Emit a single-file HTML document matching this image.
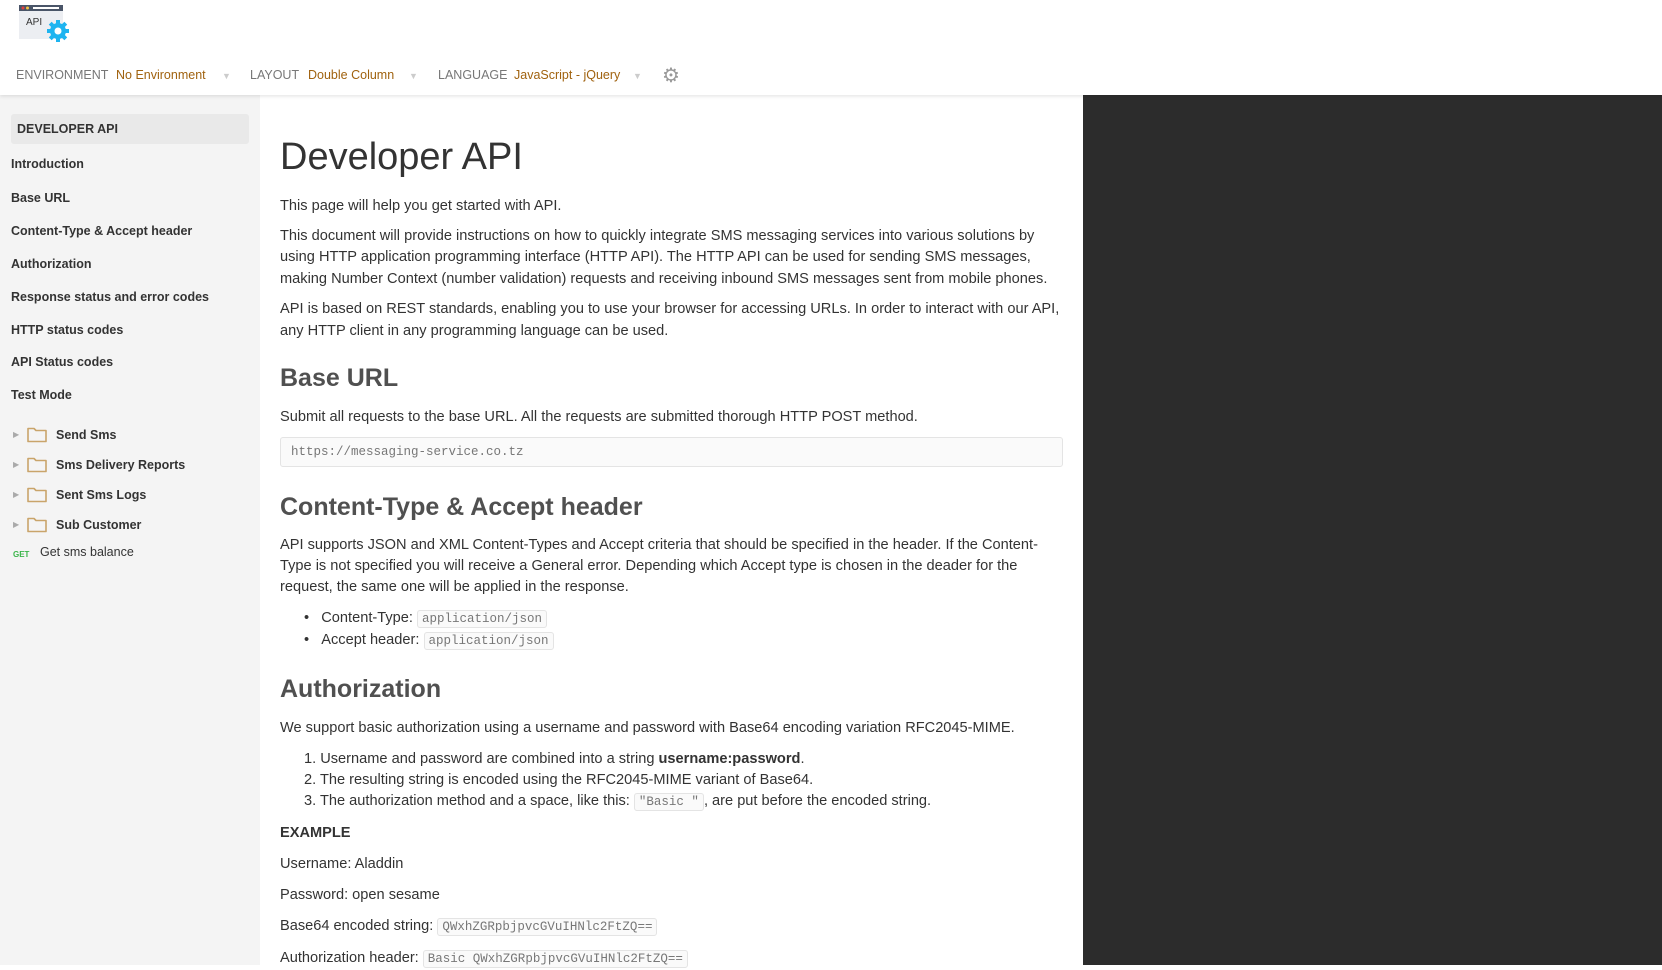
<!DOCTYPE html>
<html><head><meta charset="utf-8"><style>
*{margin:0;padding:0;box-sizing:border-box}
body{width:1662px;height:965px;overflow:hidden;background:#fff;font-family:"Liberation Sans",sans-serif;color:#333;position:relative}
.a{position:absolute;white-space:nowrap}
.hdr{position:absolute;left:0;top:0;width:1662px;height:95px;background:#fff;box-shadow:0 1px 4px rgba(0,0,0,.12);z-index:2}
.nav{font-size:12.5px;top:68px}
.lab{color:#777}
.val{color:#a0620f}
.tri{color:#ccc;font-size:9px;top:71px}
.side{position:absolute;left:0;top:95px;width:260px;height:870px;background:#f4f4f4}
.dark{position:absolute;left:1083px;top:95px;width:579px;height:870px;background:#2c2c2c}
.si{font-size:12.5px;font-weight:bold;color:#333;left:11px}
.fl{font-size:12.5px;color:#333;left:56px;font-weight:bold}
.t{font-size:14.6px;line-height:22px;left:280px;color:#333}
.h2{font-size:25px;font-weight:bold;color:#505050;left:280px}
code{font-family:"Liberation Mono",monospace;font-size:12.5px;color:#777;border:1px solid #e4e4e4;background:#fafafa;border-radius:3px;padding:1px 4px}
</style></head><body>
<div class="hdr">
<svg class="a" style="left:19px;top:3px" width="52" height="40" viewBox="0 0 52 40">
<rect x="0" y="2" width="44" height="34" fill="#eceef2"/>
<rect x="0" y="2" width="44" height="6" fill="#4a5568"/>
<circle cx="4" cy="5" r="1.5" fill="#e53e3e"/><circle cx="8.5" cy="5" r="1.5" fill="#f6c343"/>
<rect x="14" y="4" width="26" height="2" fill="#fff"/>
<text x="7" y="22" font-size="10" font-family="Liberation Sans" fill="#333">API</text>
<g fill="#1eb4f0"><circle cx="39" cy="28" r="8"/>
<rect x="37" y="17" width="4" height="22"/><rect x="28" y="26" width="22" height="4"/>
<rect x="37" y="17" width="4" height="22" transform="rotate(45 39 28)"/><rect x="37" y="17" width="4" height="22" transform="rotate(-45 39 28)"/></g>
<circle cx="39" cy="28" r="3.5" fill="#fff"/>
</svg>
<div class="a nav lab" style="left:16px">ENVIRONMENT</div>
<div class="a nav val" style="left:116px">No Environment</div>
<div class="a tri" style="left:222px">▼</div>
<div class="a nav lab" style="left:250px">LAYOUT</div>
<div class="a nav val" style="left:308px">Double Column</div>
<div class="a tri" style="left:409px">▼</div>
<div class="a nav lab" style="left:438px">LANGUAGE</div>
<div class="a nav val" style="left:514px">JavaScript - jQuery</div>
<div class="a tri" style="left:633px">▼</div>
<div class="a" style="left:662px;top:63px;font-size:20px;color:#999">⚙</div>
</div>
<div class="side">
<div class="a" style="left:11px;top:19px;width:238px;height:30px;background:#e9e9e9;border-radius:3px"></div>
<div class="a si" style="left:17px;top:27px">DEVELOPER API</div>
<div class="a si" style="top:62px">Introduction</div>
<div class="a si" style="top:96px">Base URL</div>
<div class="a si" style="top:129px">Content-Type &amp; Accept header</div>
<div class="a si" style="top:162px">Authorization</div>
<div class="a si" style="top:195px">Response status and error codes</div>
<div class="a si" style="top:228px">HTTP status codes</div>
<div class="a si" style="top:260px">API Status codes</div>
<div class="a si" style="top:293px">Test Mode</div>
<div class="a" style="left:0;top:329px">
 <div class="a" style="left:13px;top:6px;font-size:8px;color:#aaa">▶</div>
 <svg class="a" style="left:27px;top:2px" width="20" height="18"><path d="M1 2.5h6l2 2h10v11H1z" fill="none" stroke="#c9a46a" stroke-width="1.6" stroke-linejoin="round"/></svg>
 <div class="a fl" style="top:4px">Send Sms</div>
</div>
<div class="a" style="left:0;top:359px">
 <div class="a" style="left:13px;top:6px;font-size:8px;color:#aaa">▶</div>
 <svg class="a" style="left:27px;top:2px" width="20" height="18"><path d="M1 2.5h6l2 2h10v11H1z" fill="none" stroke="#c9a46a" stroke-width="1.6" stroke-linejoin="round"/></svg>
 <div class="a fl" style="top:4px">Sms Delivery Reports</div>
</div>
<div class="a" style="left:0;top:389px">
 <div class="a" style="left:13px;top:6px;font-size:8px;color:#aaa">▶</div>
 <svg class="a" style="left:27px;top:2px" width="20" height="18"><path d="M1 2.5h6l2 2h10v11H1z" fill="none" stroke="#c9a46a" stroke-width="1.6" stroke-linejoin="round"/></svg>
 <div class="a fl" style="top:4px">Sent Sms Logs</div>
</div>
<div class="a" style="left:0;top:419px">
 <div class="a" style="left:13px;top:6px;font-size:8px;color:#aaa">▶</div>
 <svg class="a" style="left:27px;top:2px" width="20" height="18"><path d="M1 2.5h6l2 2h10v11H1z" fill="none" stroke="#c9a46a" stroke-width="1.6" stroke-linejoin="round"/></svg>
 <div class="a fl" style="top:4px">Sub Customer</div>
</div>
<div class="a" style="left:13px;top:455px;font-size:8px;font-weight:bold;color:#3bb54a">GET</div>
<div class="a" style="left:40px;top:450px;font-size:12.5px;color:#333">Get sms balance</div>
</div>
<div class="dark"></div>

<div class="a" style="left:280px;top:136px;font-size:38px;color:#333">Developer API</div>
<div class="a t" style="top:195px">This page will help you get started with API.</div>
<div class="a t" style="top:225px">This document will provide instructions on how to quickly integrate SMS messaging services into various solutions by</div>
<div class="a t" style="top:246px">using HTTP application programming interface (HTTP API). The HTTP API can be used for sending SMS messages,</div>
<div class="a t" style="top:268px">making Number Context (number validation) requests and receiving inbound SMS messages sent from mobile phones.</div>
<div class="a t" style="top:298px">API is based on REST standards, enabling you to use your browser for accessing URLs. In order to interact with our API,</div>
<div class="a t" style="top:320px">any HTTP client in any programming language can be used.</div>
<div class="a h2" style="top:364px">Base URL</div>
<div class="a t" style="top:406px">Submit all requests to the base URL. All the requests are submitted thorough HTTP POST method.</div>
<div class="a" style="left:280px;top:437px;width:783px;height:30px;border:1px solid #e4e4e4;background:#fafafa;border-radius:3px;font-family:'Liberation Mono',monospace;font-size:12.5px;color:#777;padding:7px 10px">https://messaging-service.co.tz</div>
<div class="a h2" style="top:493px">Content-Type &amp; Accept header</div>
<div class="a t" style="top:534px">API supports JSON and XML Content-Types and Accept criteria that should be specified in the header. If the Content-</div>
<div class="a t" style="top:555px">Type is not specified you will receive a General error. Depending which Accept type is chosen in the deader for the</div>
<div class="a t" style="top:576px">request, the same one will be applied in the response.</div>
<div class="a t" style="left:304px;top:607px">•&nbsp;&nbsp;&nbsp;Content-Type: <code>application/json</code></div>
<div class="a t" style="left:304px;top:629px">•&nbsp;&nbsp;&nbsp;Accept header: <code>application/json</code></div>
<div class="a h2" style="top:675px">Authorization</div>
<div class="a t" style="top:717px">We support basic authorization using a username and password with Base64 encoding variation RFC2045-MIME.</div>
<div class="a t" style="left:304px;top:748px">1. Username and password are combined into a string <b>username:password</b>.</div>
<div class="a t" style="left:304px;top:769px">2. The resulting string is encoded using the RFC2045-MIME variant of Base64.</div>
<div class="a t" style="left:304px;top:790px">3. The authorization method and a space, like this: <code>"Basic "</code>, are put before the encoded string.</div>
<div class="a t" style="top:822px;font-weight:bold">EXAMPLE</div>
<div class="a t" style="top:853px">Username: Aladdin</div>
<div class="a t" style="top:884px">Password: open sesame</div>
<div class="a t" style="top:915px">Base64 encoded string: <code>QWxhZGRpbjpvcGVuIHNlc2FtZQ==</code></div>
<div class="a t" style="top:947px">Authorization header: <code>Basic QWxhZGRpbjpvcGVuIHNlc2FtZQ==</code></div>
</body></html>
